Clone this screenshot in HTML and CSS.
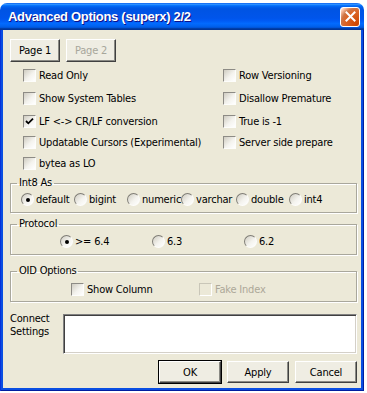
FILE: index.html
```html
<!DOCTYPE html>
<html>
<head>
<meta charset="utf-8">
<link rel="stylesheet" href="styles.css">
</head>
<body>
<div class="window">
  <div class="titlebar">
    <span class="title">Advanced Options (superx) 2/2</span>
    <span class="close"><svg width="11" height="11" viewBox="0 0 11 11"><path d="M1.5 1.5 L9.5 9.5 M9.5 1.5 L1.5 9.5" stroke="#fff" stroke-width="2" stroke-linecap="square"/></svg></span>
  </div>
  <div class="frame">
    <div class="client">
      <div class="pages">
        <button class="btn page">Page 1</button>
        <button class="btn page disabled">Page 2</button>
      </div>
      <div class="checks">
        <label class="check"><span class="box"></span>Read Only</label>
        <label class="check"><span class="box"></span>Row Versioning</label>
        <label class="check"><span class="box"></span>Show System Tables</label>
        <label class="check"><span class="box"></span>Disallow Premature</label>
        <label class="check"><span class="box on"><svg width="11" height="11" viewBox="0 0 11 11"><path d="M2 5 L4.3 7.3 L9 2.6" fill="none" stroke="#000" stroke-width="1.8"/></svg></span>LF &lt;-&gt; CR/LF conversion</label>
        <label class="check"><span class="box"></span>True is -1</label>
        <label class="check"><span class="box"></span>Updatable Cursors (Experimental)</label>
        <label class="check"><span class="box"></span>Server side prepare</label>
        <label class="check"><span class="box"></span>bytea as LO</label>
      </div>
      <fieldset class="group">
        <legend>Int8 As</legend>
        <div class="radios int8">
          <label class="radio"><span class="dot on"></span>default</label>
          <label class="radio"><span class="dot"></span>bigint</label>
          <label class="radio"><span class="dot"></span>numeric</label>
          <label class="radio"><span class="dot"></span>varchar</label>
          <label class="radio"><span class="dot"></span>double</label>
          <label class="radio"><span class="dot"></span>int4</label>
        </div>
      </fieldset>
      <fieldset class="group proto">
        <legend>Protocol</legend>
        <div class="radios protocol">
          <label class="radio"><span class="dot on"></span>&gt;= 6.4</label>
          <label class="radio"><span class="dot"></span>6.3</label>
          <label class="radio"><span class="dot"></span>6.2</label>
        </div>
      </fieldset>
      <fieldset class="group oid">
        <legend>OID Options</legend>
        <div class="oidrow">
          <label class="check"><span class="box"></span>Show Column</label>
          <label class="check disabled"><span class="box"></span>Fake Index</label>
        </div>
      </fieldset>
      <div class="connect">
        <div class="clabel">Connect<br>Settings</div>
        <div class="textarea"></div>
      </div>
      <div class="actions">
        <button class="btn act default">OK</button>
        <button class="btn act">Apply</button>
        <button class="btn act">Cancel</button>
      </div>
    </div>
  </div>
</div>
</body>
</html>
```
FILE: styles.css
```css
* { box-sizing: border-box; }
html, body { margin: 0; padding: 0; background: #fff; }
body {
  font: 11px "Liberation Sans Narrow", "DejaVu Sans Condensed", "Liberation Sans", sans-serif;
  letter-spacing: -0.2px;
  color: #000;
}
.window {
  margin-top: 3px;
  width: 364px;
  height: 388px;
  display: flex;
  flex-direction: column;
  border-radius: 7px 7px 0 0;
  overflow: hidden;
}
.titlebar {
  height: 27px;
  flex: none;
  display: flex;
  align-items: center;
  justify-content: space-between;
  padding: 0 3px 0 8px;
  background: linear-gradient(to bottom, #0058ee 0%, #3593ff 4%, #288eff 6%, #127dff 8%, #036ffc 10%, #0262ee 14%, #0057e5 20%, #0054e3 24%, #0055eb 56%, #005bf5 66%, #026afe 76%, #0062ef 86%, #0052d6 92%, #0040ab 94%, #003092 100%);
}
.title {
  color: #fff;
  font: bold 13px "Liberation Sans", sans-serif;
  letter-spacing: -0.3px;
  text-shadow: 1px 1px #0f1089;
}
.close {
  width: 20px;
  height: 20px;
  margin-right: 1px;
  border: 1px solid #fff;
  border-radius: 3px;
  display: flex;
  align-items: center;
  justify-content: center;
  background: radial-gradient(circle at 90% 90%, #cc4600 0%, #dc6527 55%, #cd7546 70%, #ffccb2 90%, #fff 100%);
}
.frame {
  flex: 1;
  display: flex;
  background: #0a4ee2;
  padding: 0 3px 3px 3px;
  box-shadow: inset 1px 0 #0831d9, inset -1px 0 #001ea0, inset 0 -1px #001ea0;
}
.client {
  flex: 1;
  background: #ece9d8;
  padding: 9px 4px 0 7px;
  display: flex;
  flex-direction: column;
}
.btn {
  font: inherit;
  letter-spacing: inherit;
  color: #000;
  background: #efede3;
  border: 1px solid;
  border-color: #fff #404040 #404040 #fff;
  box-shadow: inset -1px -1px #8a8a84;
  padding: 0;
  margin: 0;
}
.btn.disabled { color: #a7a69b; }
.pages { display: flex; gap: 6px; }
.page { width: 50px; height: 23px; }
.checks {
  display: grid;
  grid-template-columns: 200px 1fr;
  grid-template-rows: 23px 23px 21px 21px 13px;
  margin-top: 7px;
  padding-left: 13px;
}
.check {
  display: flex;
  align-items: center;
  gap: 3px;
  height: 13px;
  white-space: nowrap;
}
.box {
  width: 13px;
  height: 13px;
  flex: none;
  border: 1px solid;
  border-color: #8d8b85 #fdfdfb #fdfdfb #8d8b85;
  background: linear-gradient(135deg, #cfccc1 0%, #f4f3ee 55%, #fff 100%);
  display: flex;
  align-items: center;
  justify-content: center;
}
.disabled { color: #aca899; }
.disabled .box { background: #ece9d8; border-color: #c9c6b8 #fff #fff #c9c6b8; }
.group {
  margin: 7px 0 0 0;
  padding: 4px 0 6px 0;
  border: 1px solid #a9a79c;
  box-shadow: 1px 1px #fff, inset 1px 1px #fff;
  min-width: 0;
}
.group legend {
  margin-left: 6px;
  padding: 0 2px;
  line-height: 12px;
}
.proto { margin-top: 5px; padding-top: 5px; }
.oid { margin-top: 10px; padding-top: 6px; padding-bottom: 5px; }
.radios { display: grid; height: 13px; }
.int8 { grid-template-columns: 53px 53px 54px 55px 53px 1fr; padding-left: 10px; }
.protocol { grid-template-columns: 92px 92px 1fr; padding-left: 49px; }
.radio {
  display: flex;
  align-items: center;
  gap: 2px;
  height: 13px;
  white-space: nowrap;
}
.dot {
  width: 13px;
  height: 13px;
  flex: none;
  border-radius: 50%;
  border: 1px solid;
  border-color: #7f7d76 #fdfdfb #fdfdfb #7f7d76;
  background: linear-gradient(135deg, #cfccc1 0%, #f4f3ee 55%, #fff 100%);
  display: flex;
  align-items: center;
  justify-content: center;
}
.dot.on::after {
  content: "";
  width: 4px;
  height: 4px;
  border-radius: 50%;
  background: #000;
}
.oidrow {
  display: grid;
  grid-template-columns: 128px 1fr;
  padding-left: 60px;
}
.connect {
  display: flex;
  align-items: flex-start;
  margin-top: 12px;
}
.clabel {
  width: 53px;
  flex: none;
  line-height: 13px;
  margin-top: -2px;
}
.textarea {
  width: 294px;
  height: 40px;
  background: #fff;
  border: 1px solid;
  border-color: #808080 #fff #fff #808080;
  box-shadow: inset 1px 1px #404040, inset -1px -1px #d4d0c8;
}
.actions {
  display: flex;
  justify-content: flex-end;
  gap: 6px;
  margin-top: 7px;
}
.act { width: 62px; height: 22px; }
.default { outline: 1px solid #000; }
```
